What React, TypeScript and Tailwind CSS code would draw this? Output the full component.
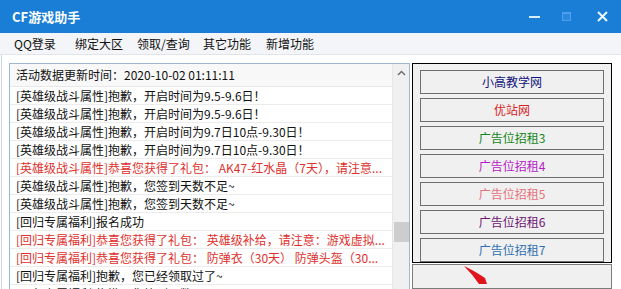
import React from "react";

const rows: { t: string; red?: boolean }[] = [
  { t: "[英雄级战斗属性]抱歉，开启时间为9.5-9.6日！" },
  { t: "[英雄级战斗属性]抱歉，开启时间为9.5-9.6日！" },
  { t: "[英雄级战斗属性]抱歉，开启时间为9.7日10点-9.30日！" },
  { t: "[英雄级战斗属性]抱歉，开启时间为9.7日10点-9.30日！" },
  { t: "[英雄级战斗属性]恭喜您获得了礼包： AK47-红水晶（7天），请注意...", red: true },
  { t: "[英雄级战斗属性]抱歉，您签到天数不足~" },
  { t: "[英雄级战斗属性]抱歉，您签到天数不足~" },
  { t: "[回归专属福利]报名成功" },
  { t: "[回归专属福利]恭喜您获得了礼包： 英雄级补给，请注意：游戏虚拟...", red: true },
  { t: "[回归专属福利]恭喜您获得了礼包： 防弹衣（30天） 防弹头盔（30...", red: true },
  { t: "[回归专属福利]抱歉，您已经领取过了~" },
  { t: "[回归专属福利]抱歉，您签到天数不足~" },
];

const buttons: { t: string; c: string }[] = [
  { t: "小高教学网", c: "text-[#10107A]" },
  { t: "优站网", c: "text-[#D8231E]" },
  { t: "广告位招租3", c: "text-[#14861A]" },
  { t: "广告位招租4", c: "text-[#B81CC8]" },
  { t: "广告位招租5", c: "text-[#E5727C]" },
  { t: "广告位招租6", c: "text-[#6E1470]" },
  { t: "广告位招租7", c: "text-[#2F6FAF]" },
];

export default function App() {
  return (
    <div className="w-[621px] h-[289px] overflow-hidden bg-white font-['Noto_Sans_CJK_SC','Noto_Sans',sans-serif] text-[12px] text-[#111]">
      {/* Title bar */}
      <div className="h-[33px] bg-[#1A7ED7] flex items-center pl-[12px]">
        <span className="text-white font-bold text-[13px] leading-none">CF游戏助手</span>
        <div className="ml-auto flex items-center pr-[13px]">
          <svg width="11" height="11" viewBox="0 0 11 11">
            <rect x="0" y="5" width="11" height="2" fill="#D6EEFF" />
          </svg>
          <svg width="9" height="9" viewBox="0 0 9 9" className="ml-[22px]">
            <rect x="0.5" y="0.5" width="8" height="8" fill="#2A88DE" stroke="#4FA0EC" strokeWidth="1" />
            <rect x="0.5" y="0.5" width="8" height="1.5" fill="#4FA0EC" />
          </svg>
          <svg width="11" height="11" viewBox="0 0 11 11" className="ml-[26px]">
            <path d="M1 1 L10 10 M10 1 L1 10" stroke="#EAF8FF" strokeWidth="2" />
          </svg>
        </div>
      </div>

      {/* Menu bar */}
      <div className="h-[22px] bg-[#F3F5F8] border-b border-[#E1E4E8] flex items-center pl-[14px] text-[12px] leading-none">
        <span className="w-[61px]">QQ登录</span>
        <span className="w-[62px]">绑定大区</span>
        <span className="w-[66px]">领取/查询</span>
        <span className="w-[63px]">其它功能</span>
        <span>新增功能</span>
      </div>

      {/* Body */}
      <div className="flex pt-[8px] pl-[7px] ml-[1px] border-l border-[#CCD8E4] h-[234px]">
        {/* List box */}
        <div className="w-[401px] h-[240px] border border-[#9DB8D2] flex">
          <div className="flex-1 border-r border-[#E6E6E6] overflow-hidden">
            <div className="h-[23px] bg-[#F8F8F8] border-b border-[#E8E8E8] flex items-center pl-[6px] whitespace-nowrap">
              活动数据更新时间：2020-10-02 01:11:11
            </div>
            {rows.map((r, i) => (
              <div
                key={i}
                className={`h-[18px] border-b border-[#ECECEC] flex items-center pl-[6px] whitespace-nowrap overflow-hidden ${
                  r.red ? "text-[#E0302C]" : "text-[#111]"
                }`}
              >
                {r.t}
              </div>
            ))}
          </div>
          {/* Scrollbar */}
          <div className="w-[16px] bg-[#F0F0F0] flex flex-col items-center">
            <div className="h-[17px] flex items-center justify-center">
              <svg width="9" height="6" viewBox="0 0 9 6">
                <path d="M1 5 L4.5 1.5 L8 5" stroke="#6A6A6A" strokeWidth="1.4" fill="none" />
              </svg>
            </div>
            <div className="mt-[141px] w-[15px] h-[20px] bg-[#CDCDCD]" />
          </div>
        </div>

        {/* Right column */}
        <div className="ml-[2px] w-[200px] flex flex-col">
          <div className="h-[206px] border border-black bg-[#F0F0F0] pt-[6px] px-[7px] flex flex-col gap-[4px]">
            {buttons.map((b, i) => (
              <div
                key={i}
                className={`h-[24px] border border-[#6E6E6E] bg-[#F0F0F0] flex items-center justify-center text-[12px] leading-none ${b.c}`}
              >
                {b.t}
              </div>
            ))}
          </div>
          <div className="mt-[1px] h-[40px] border border-[#7C7C7C] bg-[#F0F0F0] relative overflow-hidden">
            <svg width="198" height="40" viewBox="0 0 198 40" className="absolute left-0 top-0">
              <path d="M51 1 Q60 5 72 13 L74 19 L66 19 Q60 10 51 1 Z" fill="#E0141E" />
            </svg>
          </div>
        </div>
      </div>
    </div>
  );
}
